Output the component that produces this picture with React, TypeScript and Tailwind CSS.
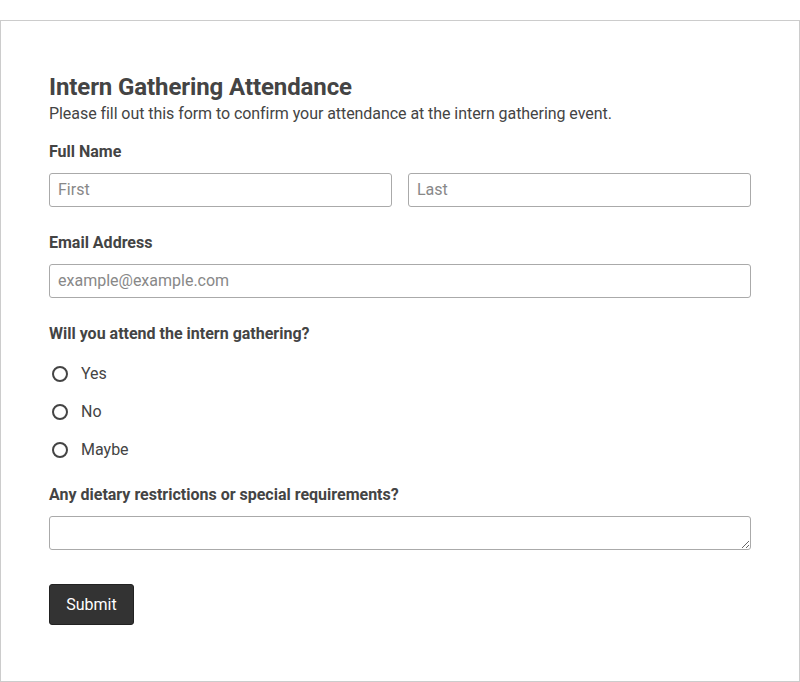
import React from "react"

function Radio({ label }: { label: string }) {
  return (
    <label className="flex h-[24px] items-center">
      <span className="ml-[3px] size-[16px] rounded-full border-2 border-[#444]" />
      <span className="ml-[13px] text-[16px] text-[#444]">{label}</span>
    </label>
  )
}

export default function App() {
  const inputCls =
    "h-[34px] w-full rounded-[3px] border border-[#aaa] bg-white px-[8px] pb-[2px] text-[16px] text-[#444] outline-none placeholder:text-[#888]"

  return (
    <div className="bg-white pt-[20px]" style={{ fontFamily: "Roboto, 'Liberation Sans', sans-serif" }}>
      <div className="h-[662px] border border-[#ccc] px-[48px] pt-[51px] text-[#444]">
        <h1 className="text-[24px] font-bold leading-[30px] tracking-[-0.1px] text-[#444]">
          Intern Gathering Attendance
        </h1>
        <p className="text-[16px] leading-[24px] tracking-[-0.06px]">
          Please fill out this form to confirm your attendance at the intern gathering event.
        </p>

        {/* Full name */}
        <div className="mt-[14px] text-[16px] font-bold leading-[24px]">Full Name</div>
        <div className="mt-[9px] grid grid-cols-2 gap-[16px]">
          <input className={inputCls} placeholder="First" />
          <input className={inputCls} placeholder="Last" />
        </div>

        {/* Email */}
        <div className="mt-[24px] text-[16px] font-bold leading-[24px]">Email Address</div>
        <input className={`mt-[9px] block ${inputCls}`} placeholder="example@example.com" />

        {/* Attendance */}
        <div className="mt-[24px] text-[16px] font-bold leading-[24px]">Will you attend the intern gathering?</div>
        <div className="mt-[16px] flex flex-col gap-[14px]">
          <Radio label="Yes" />
          <Radio label="No" />
          <Radio label="Maybe" />
        </div>

        {/* Dietary */}
        <div className="mt-[21px] text-[16px] font-bold leading-[24px]">
          Any dietary restrictions or special requirements?
        </div>
        <textarea
          className="mt-[9px] block h-[34px] w-full rounded-[3px] border border-[#aaa] px-[8px] text-[16px] outline-none"
          rows={1}
        />

        <button className="mt-[34px] h-[41px] w-[85px] rounded-[3px] border border-[#222] bg-[#333] text-[16px] text-white">
          Submit
        </button>
      </div>
    </div>
  )
}
